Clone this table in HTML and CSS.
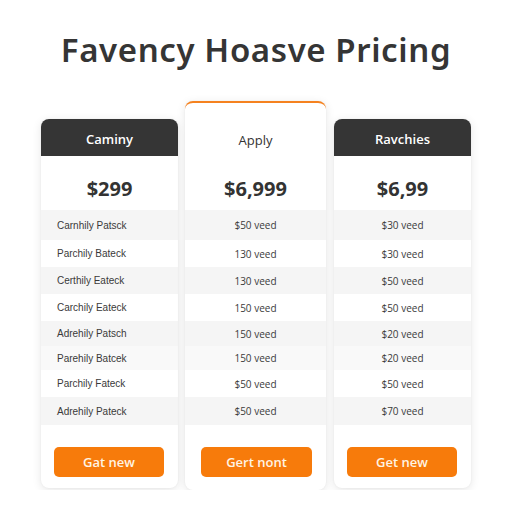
FILE: index.html
```html
<!DOCTYPE html>
<html>
<head>
<meta charset="utf-8">
<link rel="stylesheet" href="styles.css">
</head>
<body>
<h1 class="title">Favency Hoasve Pricing</h1>
<div class="plans">
  <div class="card side">
    <div class="head dark">Caminy</div>
    <div class="price">$299</div>
    <ul class="rows left">
      <li>Carnhily Patsck</li>
      <li>Parchily Bateck</li>
      <li>Certhily Eateck</li>
      <li>Carchily Eateck</li>
      <li>Adrehily Patsch</li>
      <li>Parehily Batcek</li>
      <li>Parchily Fateck</li>
      <li>Adrehily Pateck</li>
    </ul>
    <div class="foot"><button class="btn">Gat new</button></div>
  </div>
  <div class="card featured">
    <div class="head light">Apply</div>
    <div class="price">$6,999</div>
    <ul class="rows">
      <li>$50 veed</li>
      <li>130 veed</li>
      <li>130 veed</li>
      <li>150 veed</li>
      <li>150 veed</li>
      <li>150 veed</li>
      <li>$50 veed</li>
      <li>$50 veed</li>
    </ul>
    <div class="foot wide"><button class="btn">Gert nont</button></div>
  </div>
  <div class="card side">
    <div class="head dark">Ravchies</div>
    <div class="price">$6,99</div>
    <ul class="rows">
      <li>$30 veed</li>
      <li>$30 veed</li>
      <li>$50 veed</li>
      <li>$50 veed</li>
      <li>$20 veed</li>
      <li>$20 veed</li>
      <li>$50 veed</li>
      <li>$70 veed</li>
    </ul>
    <div class="foot"><button class="btn">Get new</button></div>
  </div>
</div>
</body>
</html>
```
FILE: styles.css
```css
* { box-sizing: border-box; }
body {
  margin: 0;
  background: #ffffff;
  font-family: "Open Sans", "Liberation Sans", sans-serif;
  color: #333;
}
.title {
  margin: 30px 0 0;
  height: 40px;
  line-height: 40px;
  text-align: center;
  font-family: "Noto Sans", "Open Sans", sans-serif;
  font-size: 33px;
  font-weight: 600;
  color: #353535;
  letter-spacing: 0.6px;
}
.plans {
  margin-top: 31px;
  display: flex;
  justify-content: center;
  align-items: flex-start;
  gap: 7px;
}
.plans .card + .card + .card { margin-left: 1px; }
.card {
  background: #fff;
  border-radius: 8px;
  box-shadow: 0 2px 10px rgba(0,0,0,0.10), 0 0 2px rgba(0,0,0,0.05);
  overflow: hidden;
}
.side { width: 137px; margin-top: 18px; }
.featured {
  width: 141px;
  border-top: 2px solid #f5821f;
}
.head {
  display: flex;
  align-items: center;
  justify-content: center;
  font-size: 13px;
  font-weight: 600;
}
.dark {
  height: 37px;
  padding-top: 3px;
  background: #353535;
  color: #fff;
}
.light {
  height: 53px;
  padding-top: 20px;
  color: #333;
  font-weight: 400;
}
.price {
  height: 54px;
  display: flex;
  align-items: center;
  justify-content: center;
  font-size: 20px;
  font-weight: 700;
  color: #333;
  padding-top: 11px;
}
.rows {
  list-style: none;
  margin: 0;
  padding: 0;
}
.rows li {
  height: 27px;
  display: flex;
  align-items: center;
  justify-content: center;
  font-size: 10px;
  color: #3a3a3a;
  background: #fff;
}
.rows li:nth-child(1) { height: 30px; }
.rows li:nth-child(5) { height: 25px; }
.rows li:nth-child(6) { height: 24px; }
.rows li:nth-child(8) { height: 28px; }
.rows li:nth-child(1),
.rows li:nth-child(3),
.rows li:nth-child(5),
.rows li:nth-child(6),
.rows li:nth-child(8) { background: #f5f5f5; }
.rows li:nth-child(6) { background: #f9f9f9; }
.rows.left li {
  justify-content: flex-start;
  padding-left: 16px;
  font-family: "Liberation Sans", Arial, sans-serif;
  font-size: 10px;
}
.foot {
  padding: 22px 14px 11px 13px;
}
.foot.wide { padding: 22px 14px 13px 16px; }
.btn {
  display: block;
  width: 100%;
  height: 30px;
  border: none;
  border-radius: 5px;
  background: #f77b0b;
  color: #fff4e4;
  font-family: "Open Sans", "Liberation Sans", sans-serif;
  font-size: 13px;
  font-weight: 600;
  padding: 0;
}
```
